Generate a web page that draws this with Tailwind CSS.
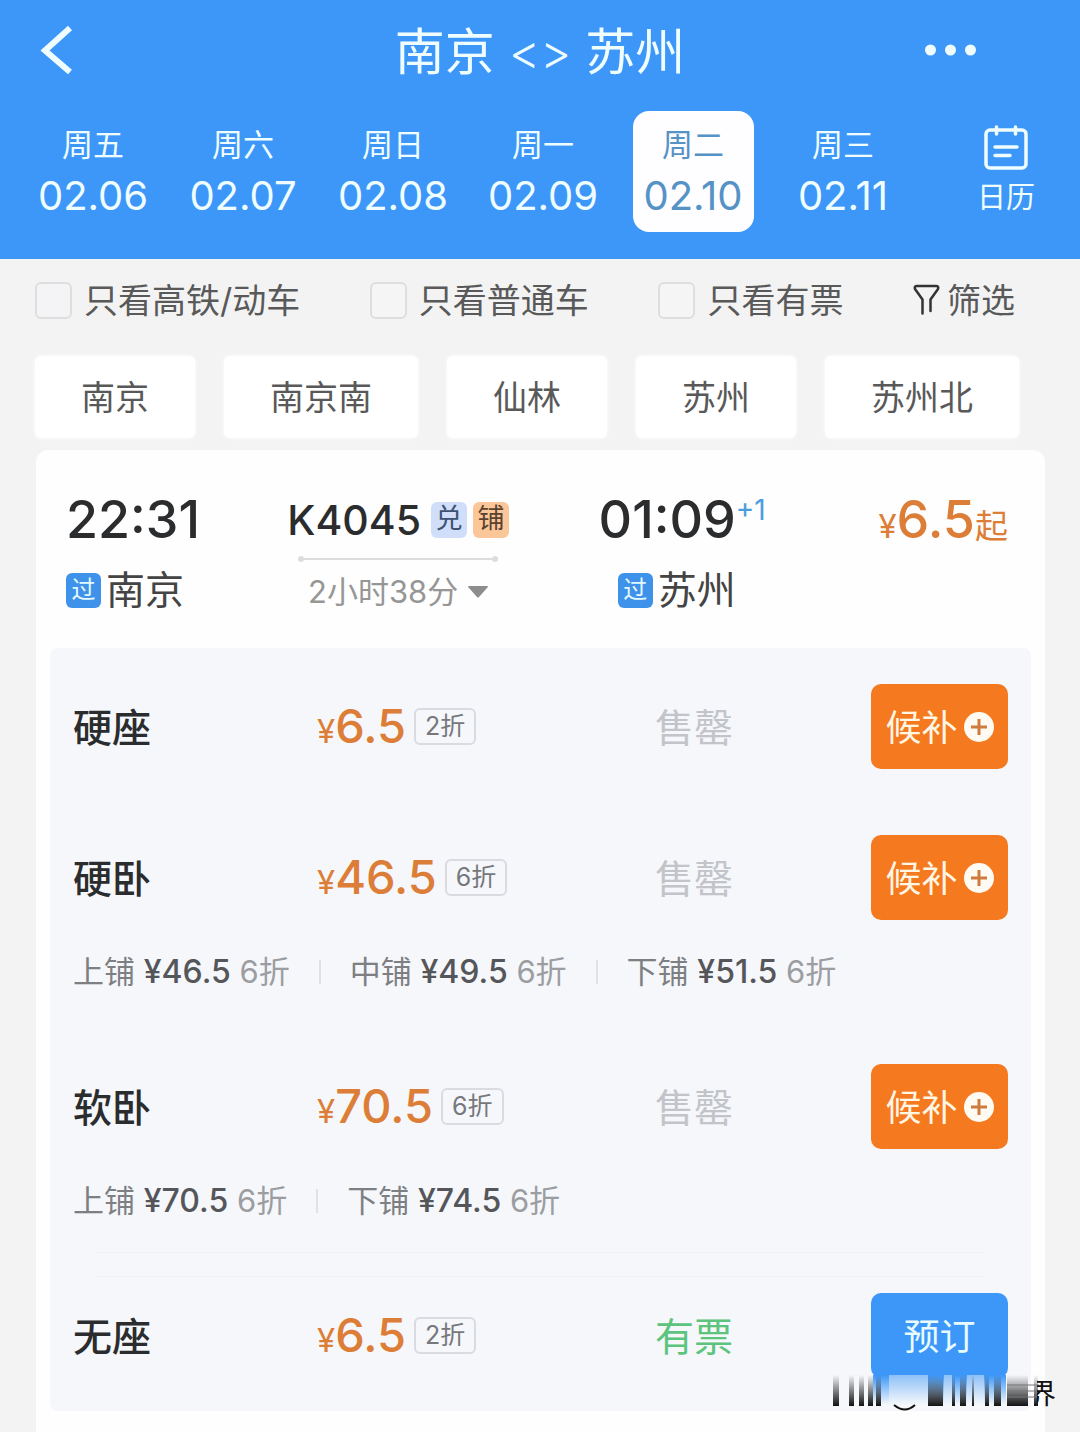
<!DOCTYPE html>
<html lang="zh-CN">
<head>
  <meta charset="UTF-8" />
  <meta name="viewport" content="width=device-width, initial-scale=1.0"/>
  <title>南京 - 苏州</title>
  <script src="https://cdn.jsdelivr.net/npm/@tailwindcss/browser@4"></script>
</head>
<body class="bg-[#f3f3f3] min-h-screen flex flex-col font-['Inter','Noto_Sans_CJK_SC',sans-serif] text-[#2b2c2e]">

  <!-- Header -->
  <header class="bg-[#3c97f9] text-[#f0fdff] pb-[27px]">
    <div class="flex items-center justify-between h-[100px] pl-10 pr-[104px]">
      <button type="button" aria-label="返回" class="w-[51px]">
        <svg class="w-8 h-12" viewBox="0 0 32 48" fill="none" stroke="currentColor" stroke-width="6"><path d="M30 2 5 24.500 30 46"/></svg>
      </button>
      <h1 class="flex items-center gap-[14px] text-[50px] leading-[50px] pl-[64px] pt-1">南京<span class="text-[48px] font-light">&lt;&gt;</span>苏州</h1>
      <button type="button" aria-label="更多">
        <svg class="w-[51px] h-3" viewBox="0 0 51 12" fill="currentColor"><circle cx="5.500" cy="6" r="5.500"/><circle cx="25.500" cy="6" r="5.500"/><circle cx="45.500" cy="6" r="5.500"/></svg>
      </button>
    </div>

    <!-- Dates -->
    <nav class="flex pt-[11px] pl-[18px] pr-[30px]">
      <div class="flex-1 grid grid-cols-6 justify-items-center mr-11 text-[40px] leading-[54px]">
        <a href="#" class="w-[121px] h-[121px] pt-[10px] flex flex-col items-center"><span class="text-[31px] leading-[48px]">周五</span>02.06</a>
        <a href="#" class="w-[121px] h-[121px] pt-[10px] flex flex-col items-center"><span class="text-[31px] leading-[48px]">周六</span>02.07</a>
        <a href="#" class="w-[121px] h-[121px] pt-[10px] flex flex-col items-center"><span class="text-[31px] leading-[48px]">周日</span>02.08</a>
        <a href="#" class="w-[121px] h-[121px] pt-[10px] flex flex-col items-center"><span class="text-[31px] leading-[48px]">周一</span>02.09</a>
        <a href="#" aria-current="date" class="w-[121px] h-[121px] pt-[10px] flex flex-col items-center rounded-2xl bg-[#fefdff] text-[#5592c6]"><span class="text-[31px] leading-[48px]">周二</span>02.10</a>
        <a href="#" class="w-[121px] h-[121px] pt-[10px] flex flex-col items-center"><span class="text-[31px] leading-[48px]">周三</span>02.11</a>
      </div>
      <button type="button" class="w-[88px] flex flex-col items-center pt-[14px]">
        <svg class="w-11 h-[46px]" viewBox="0 0 44 46" fill="none" stroke="currentColor" stroke-width="3.500" stroke-linecap="round"><rect x="2" y="5" width="40" height="38" rx="4"/><path d="M12.500 2v7M31.500 2v7M11 22h22M11 30.500h15"/></svg>
        <span class="text-[29px] leading-[54px]">日历</span>
      </button>
    </nav>
  </header>

  <!-- Filters -->
  <div class="flex items-center justify-between h-[82px] pl-[35px] pr-[65px] text-[34px] text-[#59595a]">
    <label class="flex items-center gap-3"><input type="checkbox" class="appearance-none size-[37px] rounded-md border-2 border-[#dedede] bg-[#f4f4f6] checked:bg-[#3c97f9]"/>只看高铁/动车</label>
    <label class="flex items-center gap-3"><input type="checkbox" class="appearance-none size-[37px] rounded-md border-2 border-[#dedede] bg-[#f5f5f5] checked:bg-[#3c97f9]"/>只看普通车</label>
    <label class="flex items-center gap-3"><input type="checkbox" class="appearance-none size-[37px] rounded-md border-2 border-[#dedede] bg-[#f5f5f5] checked:bg-[#3c97f9]"/>只看有票</label>
    <button type="button" class="flex items-center gap-[7px]">
      <svg class="w-[27px] h-8" viewBox="0 0 27 32" fill="none" stroke="#333" stroke-width="2.500" stroke-linejoin="round" stroke-linecap="round"><path d="M9.500 29.500V15.500L2 5q-1-3 2-3h19q3 0 2 3l-7.500 10.500V27"/></svg>
      筛选
    </button>
  </div>

  <!-- Stations -->
  <div class="flex justify-between pt-[15px] pl-[35px] pr-[61px] pb-3 text-[34px] text-[#59595a]">
    <button type="button" class="h-[82px] px-[46px] rounded-md bg-white shadow-[0_0_4px_#fff]">南京</button>
    <button type="button" class="h-[82px] px-[46px] rounded-md bg-white shadow-[0_0_4px_#fff]">南京南</button>
    <button type="button" class="h-[82px] px-[46px] rounded-md bg-white shadow-[0_0_4px_#fff]">仙林</button>
    <button type="button" class="h-[82px] px-[46px] rounded-md bg-white shadow-[0_0_4px_#fff]">苏州</button>
    <button type="button" class="h-[82px] px-[46px] rounded-md bg-white shadow-[0_0_4px_#fff]">苏州北</button>
  </div>

  <!-- Train card -->
  <main class="relative flex-1 ml-9 mr-[35px] px-[14px] pb-[22px] rounded-t-xl bg-[#fefefe]">
    <section class="grid grid-cols-[221fr_311fr_200fr_209fr] justify-items-start h-[198px] pt-10 pl-4 pr-[23px]">
      <div>
        <div class="text-[52px] leading-[60px] font-medium">22:31</div>
        <div class="flex items-center gap-[5px] mt-[10px] text-[39px] leading-[60px] text-[#444]"><span class="size-[35px] rounded-md bg-[#3f92ea] text-[#e4f9ff] text-[24px] leading-[34px] text-center">过</span>南京</div>
      </div>
      <div class="flex flex-col items-center">
        <div class="flex items-center gap-[6px] text-[41px] leading-[60px] font-medium"><span class="pr-1">K4045</span><span class="size-9 rounded-md bg-[#d0defa] text-[#3c5273] text-[27px] leading-[34px] text-center font-normal">兑</span><span class="size-9 rounded-md bg-[#fbc799] text-[#5a4130] text-[27px] leading-[34px] text-center font-normal">铺</span></div>
        <svg class="w-[200px] h-[6px] mt-[6px]" viewBox="0 0 200 6" fill="#dcdcdc"><rect y="2" width="200" height="2"/><circle cx="3" cy="3" r="3"/><circle cx="197" cy="3" r="3"/></svg>
        <button type="button" class="flex items-center gap-[10px] text-[31px] leading-[60px] text-[#969696]">2小时38分<svg class="w-5 h-3" viewBox="0 0 20 12" fill="#8d8d8d"><path d="M1 0h18q2 0 0 2l-8 9q-1 1-2 0L1 2q-2-2 0-2"/></svg></button>
      </div>
      <div class="flex flex-col items-end">
        <div class="relative text-[52px] leading-[60px] font-medium">01:09<sup class="absolute left-full top-0 text-[28px] leading-[40px] font-normal text-[#4c9ddd]">+1</sup></div>
        <div class="flex items-center gap-[5px] mt-[10px] text-[39px] leading-[60px] text-[#444]"><span class="size-[35px] rounded-md bg-[#3f92ea] text-[#e4f9ff] text-[24px] leading-[34px] text-center">过</span>苏州</div>
      </div>
      <div class="justify-self-end flex items-baseline h-[60px] text-[33px] leading-[60px] text-[#dc7e38]">¥<span class="text-[52px] font-medium">6.5</span>起</div>
    </section>

    <!-- Seats -->
    <section class="rounded-lg bg-[#f5f7fb] pt-9 pb-[33px] px-[23px]">
      <div class="grid grid-cols-[244fr_338fr_216fr_137px] items-center">
        <h2 class="text-[39px] pt-1 font-medium">硬座</h2>
        <div class="flex items-center gap-2"><span class="text-[33px] leading-[60px] pt-1 text-[#dc7e38]">¥<span class="text-[47px] font-medium">6.5</span></span><span class="h-[37px] px-[9px] rounded-md border-2 border-[#d9dbe1] text-[25px] leading-[33px] text-[#77787c]">2折</span></div>
        <span class="text-[39px] pt-1 text-[#c2c4c9]">售罄</span>
        <button type="button" class="h-[85px] rounded-[10px] bg-[#f5791f] text-[#fff6e4] text-[36px] flex items-center justify-center gap-[6px]"><span class="pt-[3px]">候补</span><svg class="size-[30px]" viewBox="0 0 30 30"><circle cx="15" cy="15" r="15" fill="#fffaf2"/><path d="M15 7v16M7 15h16" stroke="#cf7b3d" stroke-width="3"/></svg></button>
      </div>

      <div class="grid grid-cols-[244fr_338fr_216fr_137px] items-center mt-[66px]">
        <h2 class="text-[39px] pt-1 font-medium">硬卧</h2>
        <div class="flex items-center gap-2"><span class="text-[33px] leading-[60px] pt-1 text-[#dc7e38]">¥<span class="text-[47px] font-medium">46.5</span></span><span class="h-[37px] px-[9px] rounded-md border-2 border-[#d9dbe1] text-[25px] leading-[33px] text-[#77787c]">6折</span></div>
        <span class="text-[39px] pt-1 text-[#c2c4c9]">售罄</span>
        <button type="button" class="h-[85px] rounded-[10px] bg-[#f5791f] text-[#fff6e4] text-[36px] flex items-center justify-center gap-[6px]"><span class="pt-[3px]">候补</span><svg class="size-[30px]" viewBox="0 0 30 30"><circle cx="15" cy="15" r="15" fill="#fffaf2"/><path d="M15 7v16M7 15h16" stroke="#cf7b3d" stroke-width="3"/></svg></button>
      </div>
      <div class="flex items-center mt-8 text-[31px] leading-[40px] text-[#9c9da1]">
        <span><span class="text-[#7e7f83]">上铺</span> <b class="text-[32px] font-medium text-[#55565a]">¥46.5</b> 6折</span>
        <i class="w-[2px] h-6 mx-[29px] bg-[#e0e2e7]"></i>
        <span><span class="text-[#7e7f83]">中铺</span> <b class="text-[32px] font-medium text-[#55565a]">¥49.5</b> 6折</span>
        <i class="w-[2px] h-6 mx-[29px] bg-[#e0e2e7]"></i>
        <span><span class="text-[#7e7f83]">下铺</span> <b class="text-[32px] font-medium text-[#55565a]">¥51.5</b> 6折</span>
      </div>

      <div class="grid grid-cols-[244fr_338fr_216fr_137px] items-center mt-[72px]">
        <h2 class="text-[39px] pt-1 font-medium">软卧</h2>
        <div class="flex items-center gap-2"><span class="text-[33px] leading-[60px] pt-1 text-[#dc7e38]">¥<span class="text-[47px] font-medium">70.5</span></span><span class="h-[37px] px-[9px] rounded-md border-2 border-[#d9dbe1] text-[25px] leading-[33px] text-[#77787c]">6折</span></div>
        <span class="text-[39px] pt-1 text-[#c2c4c9]">售罄</span>
        <button type="button" class="h-[85px] rounded-[10px] bg-[#f5791f] text-[#fff6e4] text-[36px] flex items-center justify-center gap-[6px]"><span class="pt-[3px]">候补</span><svg class="size-[30px]" viewBox="0 0 30 30"><circle cx="15" cy="15" r="15" fill="#fffaf2"/><path d="M15 7v16M7 15h16" stroke="#cf7b3d" stroke-width="3"/></svg></button>
      </div>
      <div class="flex items-center mt-8 text-[31px] leading-[40px] text-[#9c9da1]">
        <span><span class="text-[#7e7f83]">上铺</span> <b class="text-[32px] font-medium text-[#55565a]">¥70.5</b> 6折</span>
        <i class="w-[2px] h-6 mx-[29px] bg-[#e0e2e7]"></i>
        <span><span class="text-[#7e7f83]">下铺</span> <b class="text-[32px] font-medium text-[#55565a]">¥74.5</b> 6折</span>
      </div>
      <div class="h-[25px] mt-[31px] mx-6 border-y border-[#eff1f5]"></div>

      <div class="grid grid-cols-[244fr_338fr_216fr_137px] items-center mt-4">
        <h2 class="text-[39px] pt-1 font-medium">无座</h2>
        <div class="flex items-center gap-2"><span class="text-[33px] leading-[60px] pt-1 text-[#dc7e38]">¥<span class="text-[47px] font-medium">6.5</span></span><span class="h-[37px] px-[9px] rounded-md border-2 border-[#d9dbe1] text-[25px] leading-[33px] text-[#77787c]">2折</span></div>
        <span class="text-[39px] pt-1 text-[#5cc47c]">有票</span>
        <button type="button" class="h-[85px] rounded-[10px] bg-[#3c97f9] text-[#e8fcff] text-[36px]"><span class="block pt-[3px]">预订</span></button>
      </div>
    </section>

    <!-- Smeared watermark over the button's foot -->
    <svg class="absolute -right-[12px] bottom-[22px] w-[226px] h-[36px]" viewBox="0 0 226 36">
      <defs>
        <linearGradient id="ink" x1="0" y1="0" x2="0" y2="1"><stop offset="0" stop-color="#111" stop-opacity="0"/><stop offset="1" stop-color="#111"/></linearGradient>
        <linearGradient id="smear" x1="0" y1="0" x2="0" y2="1"><stop offset="0" stop-color="#3c97f9"/><stop offset="1" stop-color="#f6f8fb"/></linearGradient>
        <linearGradient id="pale" x1="0" y1="0" x2="0" y2="1"><stop offset="0" stop-color="#8dc0f8"/><stop offset="1" stop-color="#f6f8fb"/></linearGradient>
        <clipPath id="tail"><path d="M206 0h20v36h-20z"/></clipPath>
      </defs>
      <path fill="url(#smear)" d="M42 0h133v30H42z"/>
      <path fill="url(#pale)" d="M58 0h39v30H58zM113 0h8v30h-8zM136 0h17v30h-17z"/>
      <path fill="url(#ink)" d="M2 0h6v31H2zM18 0h5v31h-5zM28 0h5v31h-5zM37 0h5v31h-5zM45 0h5v31h-5zM97 0h15v31H97zM121 0h3v31h-3zM129 0h6v31h-6zM141 0h2v31h-2zM154 0h4v31h-4zM163 0h7v31h-7zM176 0h21v31h-21zM203 0h4v31h-4z"/>
      <path d="M63 30q11 9 21 0" fill="none" stroke="#111" stroke-width="2"/>
      <path d="M176 10h32M176 16h32M176 22h32" stroke="#777" stroke-width="1"/>
      <text x="197" y="29" font-size="28" fill="#111" clip-path="url(#tail)">界</text>
    </svg>
  </main>
</body>
</html>
